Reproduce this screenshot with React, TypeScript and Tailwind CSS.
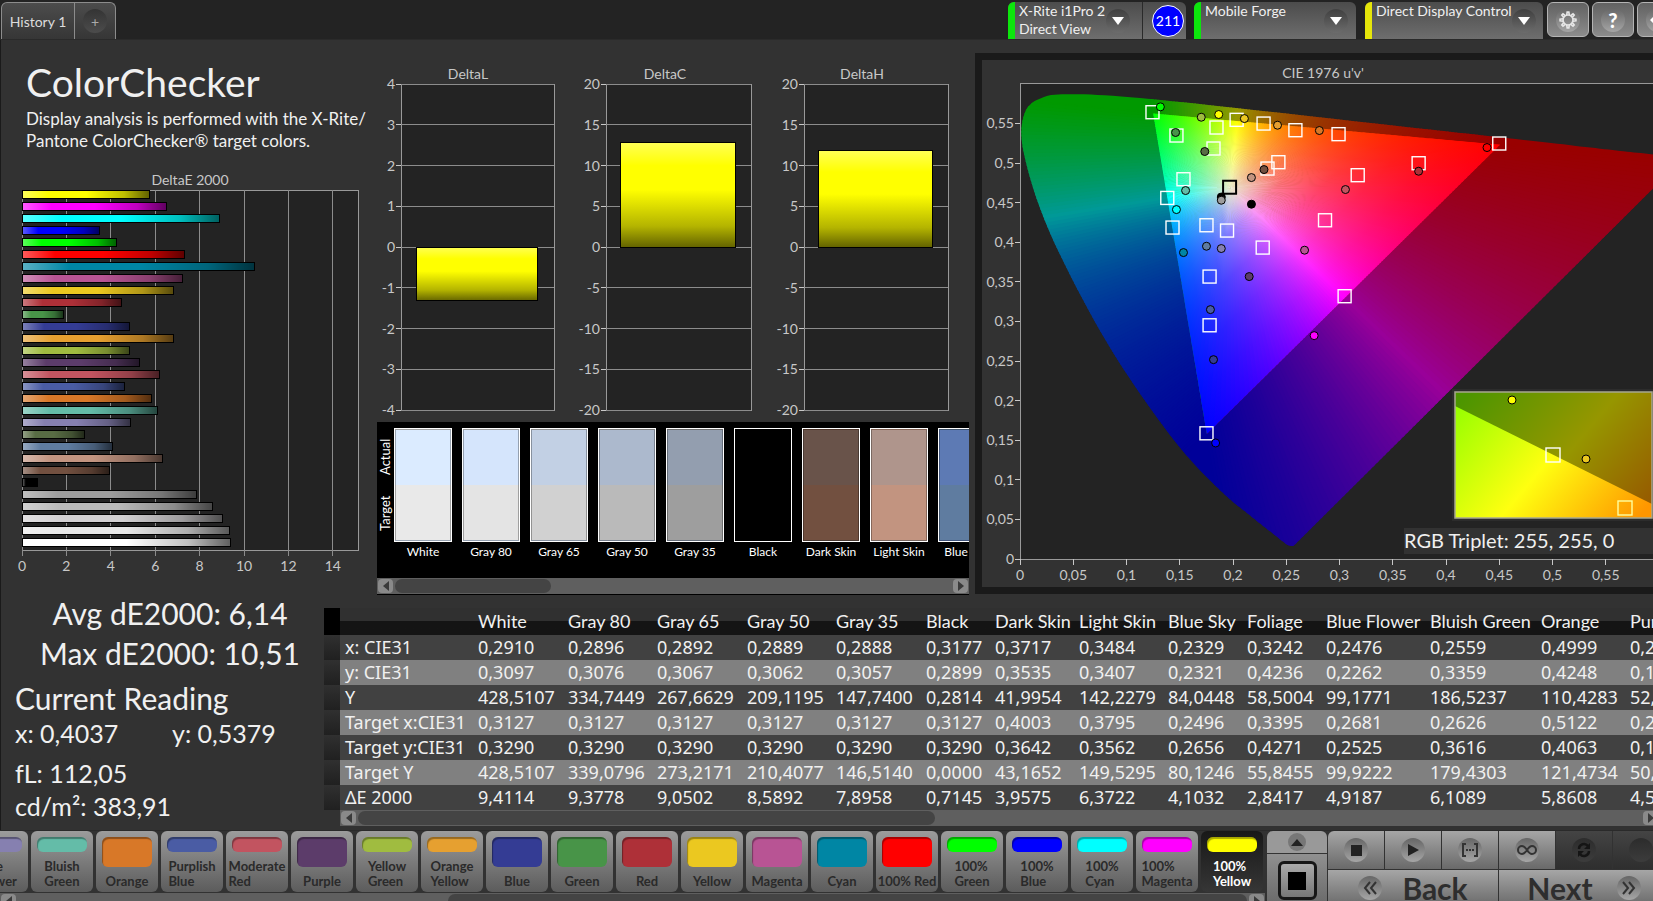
import React from 'react';

type Patch = { name: string; color: string; value: number };

const patches: Patch[] = [
  { name: '100% Yellow', color: '#ffff00', value: 5.78 },
  { name: '100% Magenta', color: '#ff00ff', value: 6.53 },
  { name: '100% Cyan', color: '#00ffff', value: 8.91 },
  { name: '100% Blue', color: '#0000ff', value: 3.5 },
  { name: '100% Green', color: '#00ff00', value: 4.3 },
  { name: '100% Red', color: '#ff0000', value: 7.32 },
  { name: 'Cyan', color: '#0086a4', value: 10.51 },
  { name: 'Magenta', color: '#b85494', value: 7.23 },
  { name: 'Yellow', color: '#ebc820', value: 6.83 },
  { name: 'Red', color: '#ae3038', value: 4.5 },
  { name: 'Green', color: '#489448', value: 1.87 },
  { name: 'Blue', color: '#343c94', value: 4.85 },
  { name: 'Orange Yellow', color: '#e6a030', value: 6.83 },
  { name: 'Yellow Green', color: '#a0bc40', value: 4.85 },
  { name: 'Purple', color: '#5c3c6a', value: 5.3 },
  { name: 'Moderate Red', color: '#c25460', value: 6.2 },
  { name: 'Purplish Blue', color: '#4a5ca4', value: 4.62 },
  { name: 'Orange', color: '#d87828', value: 5.86 },
  { name: 'Bluish Green', color: '#64bca8', value: 6.11 },
  { name: 'Blue Flower', color: '#8680b0', value: 4.92 },
  { name: 'Foliage', color: '#586c44', value: 2.84 },
  { name: 'Blue Sky', color: '#5f7ca0', value: 4.1 },
  { name: 'Light Skin', color: '#c29480', value: 6.37 },
  { name: 'Dark Skin', color: '#725040', value: 3.96 },
  { name: 'Black', color: '#000000', value: 0.71 },
  { name: 'Gray 35', color: '#9d9d9d', value: 7.9 },
  { name: 'Gray 50', color: '#bababa', value: 8.59 },
  { name: 'Gray 65', color: '#d2d0d2', value: 9.05 },
  { name: 'Gray 80', color: '#e8e8e8', value: 9.38 },
  { name: 'White', color: '#ffffff', value: 9.41 },
];

const swatches = [
  { name: 'White', actual: '#dbebff', target: '#e9e9e9' },
  { name: 'Gray 80', actual: '#d5e5fc', target: '#e4e4e4' },
  { name: 'Gray 65', actual: '#c2d0e4', target: '#d1d1d1' },
  { name: 'Gray 50', actual: '#acb9cd', target: '#bababa' },
  { name: 'Gray 35', actual: '#939eaf', target: '#9e9e9e' },
  { name: 'Black', actual: '#000000', target: '#000000' },
  { name: 'Dark Skin', actual: '#69534a', target: '#725040' },
  { name: 'Light Skin', actual: '#af958c', target: '#c29480' },
  { name: 'Blue Sky', actual: '#5d7ab4', target: '#5f7ca0' },
];

const columns = [
  { name: 'White', width: 90, cells: ['0,2910', '0,3097', '428,5107', '0,3127', '0,3290', '428,5107', '9,4114'] },
  { name: 'Gray 80', width: 89, cells: ['0,2896', '0,3076', '334,7449', '0,3127', '0,3290', '339,0796', '9,3778'] },
  { name: 'Gray 65', width: 90, cells: ['0,2892', '0,3067', '267,6629', '0,3127', '0,3290', '273,2171', '9,0502'] },
  { name: 'Gray 50', width: 89, cells: ['0,2889', '0,3062', '209,1195', '0,3127', '0,3290', '210,4077', '8,5892'] },
  { name: 'Gray 35', width: 90, cells: ['0,2888', '0,3057', '147,7400', '0,3127', '0,3290', '146,5140', '7,8958'] },
  { name: 'Black', width: 69, cells: ['0,3177', '0,2899', '0,2814', '0,3127', '0,3290', '0,0000', '0,7145'] },
  { name: 'Dark Skin', width: 84, cells: ['0,3717', '0,3535', '41,9954', '0,4003', '0,3642', '43,1652', '3,9575'] },
  { name: 'Light Skin', width: 89, cells: ['0,3484', '0,3407', '142,2279', '0,3795', '0,3562', '149,5295', '6,3722'] },
  { name: 'Blue Sky', width: 79, cells: ['0,2329', '0,2321', '84,0448', '0,2496', '0,2656', '80,1246', '4,1032'] },
  { name: 'Foliage', width: 79, cells: ['0,3242', '0,4236', '58,5004', '0,3395', '0,4271', '55,8455', '2,8417'] },
  { name: 'Blue Flower', width: 104, cells: ['0,2476', '0,2262', '99,1771', '0,2681', '0,2525', '99,9222', '4,9187'] },
  { name: 'Bluish Green', width: 111, cells: ['0,2559', '0,3359', '186,5237', '0,2626', '0,3616', '179,4303', '6,1089'] },
  { name: 'Orange', width: 89, cells: ['0,4999', '0,4248', '110,4283', '0,5122', '0,4063', '121,4734', '5,8608'] },
  { name: 'Purplish Blue', width: 111, cells: ['0,2141', '0,1962', '52,6113', '0,2164', '0,1898', '50,9184', '4,5903'] },
];

const rowLabels = ['x: CIE31', 'y: CIE31', 'Y', 'Target x:CIE31', 'Target y:CIE31', 'Target Y', 'ΔE 2000'];

const targets: [number, number][] = [
  [0.1244, 0.5641], [0.1469, 0.5347], [0.1845, 0.5448], [0.2034, 0.5545], [0.2287, 0.5498],
  [0.2586, 0.5414], [0.2991, 0.5364], [0.45, 0.5246], [0.1817, 0.5183], [0.2426, 0.501],
  [0.2324, 0.493], [0.3743, 0.4997], [0.3171, 0.4846], [0.1535, 0.4795], [0.1383, 0.4559],
  [0.1432, 0.4185], [0.1751, 0.4214], [0.1944, 0.4147], [0.2279, 0.3932], [0.2864, 0.4277],
  [0.178, 0.3566], [0.3048, 0.3318], [0.178, 0.2951], [0.1751, 0.1587],
];

const readings: [number, number, string][] = [
  [0.1318, 0.5709, '#00ff00'], [0.1702, 0.5578, '#a0bc40'], [0.1866, 0.5612, '#ffff00'],
  [0.2107, 0.5561, '#ebc820'], [0.2418, 0.5477, '#e6a030'], [0.2811, 0.541, '#d87828'],
  [0.4385, 0.5195, '#ff0000'], [0.3743, 0.4896, '#ae3038'], [0.1461, 0.5385, '#489448'],
  [0.1735, 0.5145, '#586c44'], [0.2291, 0.4917, '#725040'], [0.2173, 0.4816, '#c29480'],
  [0.3056, 0.4665, '#c25460'], [0.1555, 0.4652, '#64bca8'], [0.1469, 0.4412, '#00ffff'],
  [0.189, 0.457, '#000000'], [0.189, 0.453, '#9d9d9d'], [0.2173, 0.448, '#000000'],
  [0.1535, 0.3869, '#0086a4'], [0.1751, 0.3949, '#5f7ca0'], [0.189, 0.392, '#8680b0'],
  [0.2672, 0.3899, '#b85494'], [0.2152, 0.3566, '#5c3c6a'], [0.1788, 0.3149, '#4a5ca4'],
  [0.1817, 0.2517, '#343c94'], [0.2762, 0.282, '#ff00ff'], [0.1837, 0.1465, '#0000ff'],
];

// Spectral locus, u'v'
const locus: [number, number][] = [
  [0.2568, 0.0165], [0.2522, 0.0169], [0.2461, 0.0226], [0.2347, 0.035], [0.2161, 0.0549],
  [0.1877, 0.0871], [0.1441, 0.151], [0.0828, 0.2708], [0.0282, 0.4117], [0.0035, 0.5131],
  [0.0046, 0.5638], [0.0231, 0.5837], [0.0501, 0.5868], [0.0792, 0.5856], [0.1127, 0.5821],
  [0.1531, 0.5766], [0.2026, 0.5694], [0.2623, 0.5605], [0.3315, 0.5501], [0.4035, 0.5393],
  [0.5203, 0.5219], [0.583, 0.5125], [0.6234, 0.5065],
];

const gamut: [number, number][] = [[0.4507, 0.5229], [0.125, 0.5625], [0.1754, 0.1579]];
const white: [number, number] = [0.1978, 0.4683];

const px = (u: number) => 38 + u * 1065;
const py = (v: number) => 499 - v * 792;

function rgbAt(u: number, v: number, level = 1) {
  const d = 6 * u - 16 * v + 12;
  const x = (9 * u) / d;
  const y = (4 * v) / d;
  const X = x / y;
  const Z = (1 - x - y) / y;
  const rgb = [
    3.2406 * X - 1.5372 - 0.4986 * Z,
    -0.9689 * X + 1.8758 + 0.0415 * Z,
    0.0557 * X - 0.204 + 1.057 * Z,
  ].map((c) => Math.max(0, c));
  const max = Math.max(...rgb);
  return `rgb(${rgb.map((c) => Math.round((c / max) * 255 * level)).join(',')})`;
}

// Distance from white to the gamut edge along a direction
function edgeDistance(du: number, dv: number) {
  let best = Infinity;
  gamut.forEach((a, i) => {
    const b = gamut[(i + 1) % 3];
    const ex = b[0] - a[0];
    const ey = b[1] - a[1];
    const det = ex * dv - ey * du;
    if (Math.abs(det) < 1e-9) return;
    const wx = a[0] - white[0];
    const wy = a[1] - white[1];
    const t = (ex * wy - ey * wx) / det;
    if (t > 0 && t < best) best = t;
  });
  return best;
}

const mix = (a: [number, number], b: [number, number], t: number): [number, number] => [
  a[0] + (b[0] - a[0]) * t,
  a[1] + (b[1] - a[1]) * t,
];

const SECTORS = 360;
const sectors = Array.from({ length: SECTORS }, (_, i) => {
  const step = (2 * Math.PI) / SECTORS;
  const a = i * step;
  const b = a + step * 1.6;
  const m = a + step / 2;
  const dist = edgeDistance(Math.cos(m), Math.sin(m));
  const at = (angle: number, r: number): [number, number] => [
    white[0] + Math.cos(angle) * r,
    white[1] + Math.sin(angle) * r,
  ];
  return { id: `s${i}`, a: at(a, 0.9), b: at(b, 0.9), edge: at(m, dist) };
});

// Outside the gamut the hue is constant on lines through the opposite primary
const FAN = 120;
const fans = gamut.flatMap((apex, k) => {
  const from = gamut[(k + 1) % 3];
  const to = gamut[(k + 2) % 3];
  return Array.from({ length: FAN }, (_, i) => {
    const mid = mix(from, to, (i + 0.5) / FAN);
    return {
      id: `f${k}-${i}`,
      points: [
        apex,
        mix(apex, mix(from, to, i / FAN), 5),
        mix(apex, mix(from, to, Math.min(1, (i + 1.5) / FAN)), 5),
      ],
      fill: rgbAt(mid[0], mid[1], 0.6),
    };
  });
});

const corners = gamut.map((apex, k) => ({
  points: [apex, mix(gamut[(k + 1) % 3], apex, 5), mix(gamut[(k + 2) % 3], apex, 5)],
  fill: ['#990000', '#009900', '#000099'][k],
}));

const toPoints = (list: [number, number][]) => list.map(([u, v]) => `${px(u)},${py(v)}`).join(' ');

function locusPath() {
  const p = locus.map(([u, v]) => [px(u), py(v)]);
  let d = `M${p[0][0]} ${p[0][1]}`;
  for (let i = 0; i < p.length - 1; i++) {
    const p0 = p[Math.max(0, i - 1)];
    const p1 = p[i];
    const p2 = p[i + 1];
    const p3 = p[Math.min(p.length - 1, i + 2)];
    d += `C${p1[0] + (p2[0] - p0[0]) / 6} ${p1[1] + (p2[1] - p0[1]) / 6} ${p2[0] - (p3[0] - p1[0]) / 6} ${
      p2[1] - (p3[1] - p1[1]) / 6
    } ${p2[0]} ${p2[1]}`;
  }
  return d + 'Z';
}

const comma = (n: number) => String(n).replace('.', ',');

const DeltaEChart: React.FC = () => {
  const x = (v: number) => 22 + v * 22.2;
  return (
    <svg viewBox="0 0 370 410" className="block w-full overflow-visible" role="img" aria-label="DeltaE 2000">
      <defs>
        <linearGradient id="bar">
          <stop offset="0" stopColor="#fff" stopOpacity="0.35" />
          <stop offset="0.2" stopColor="#fff" stopOpacity="0" />
          <stop offset="0.5" stopColor="#000" stopOpacity="0" />
          <stop offset="0.8" stopColor="#000" stopOpacity="0.25" />
          <stop offset="1" stopColor="#000" stopOpacity="0.62" />
        </linearGradient>
      </defs>
      <text x="190" y="17" textAnchor="middle" className="fill-[#c8c8c8] text-[14px]">DeltaE 2000</text>
      <rect x="22" y="22" width="336" height="360" fill="#232323" stroke="#999" shapeRendering="crispEdges" />
      {[0, 2, 4, 6, 8, 10, 12, 14].map((t) => (
        <g key={t}>
          <path d={`M${x(t)} 22V388`} stroke="#8c8c8c" shapeRendering="crispEdges" />
          <text x={x(t)} y="403" textAnchor="middle" className="fill-[#c8c8c8] text-[14px]">{t}</text>
        </g>
      ))}
      {patches.map((p, i) => (
        <g key={p.name} shapeRendering="crispEdges">
          <rect x="22" y={22 + i * 12} width={p.value * 22.2} height="9" fill="#000" />
          <rect x="23" y={23 + i * 12} width={p.value * 22.2 - 2} height="7" fill={p.color} />
          <rect x="23" y={23 + i * 12} width={p.value * 22.2 - 2} height="7" fill="url(#bar)" />
        </g>
      ))}
    </svg>
  );
};

const DeltaChart: React.FC<{ title: string; max: number; value: number; left: number }> = ({
  title,
  max,
  value,
  left,
}) => {
  const width = 184 - left;
  const y = (v: number) => 180 - (v / max) * 163;
  const ticks = Array.from({ length: 9 }, (_, i) => max - (i * max) / 4);
  const top = y(Math.max(0, value));
  return (
    <svg viewBox="0 0 197 355" className="block w-full overflow-visible" role="img" aria-label={title}>
      <defs>
        <linearGradient id={title} x1="0" y1="0" x2="0" y2="1">
          <stop offset="0" stopColor="#ffff55" />
          <stop offset="0.22" stopColor="#ffff00" />
          <stop offset="0.45" stopColor="#ffff00" />
          <stop offset="0.8" stopColor="#b4b400" />
          <stop offset="1" stopColor="#646400" />
        </linearGradient>
      </defs>
      <text x="98" y="12" textAnchor="middle" className="fill-[#c8c8c8] text-[14px]">{title}</text>
      <rect x={left} y="17" width={width} height="326" fill="#232323" stroke="#999" shapeRendering="crispEdges" />
      {ticks.map((t) => (
        <g key={t}>
          <path d={`M${left} ${y(t)}H${left + width}`} stroke="#8c8c8c" shapeRendering="crispEdges" />
          <path d={`M${left - 5} ${y(t)}H${left}`} stroke="#c8c8c8" shapeRendering="crispEdges" />
          <text x={left - 6} y={y(t) + 5} textAnchor="end" className="fill-[#c8c8c8] text-[14px]">{t}</text>
        </g>
      ))}
      <rect
        x={left + width * 0.1}
        y={top}
        width={width * 0.79}
        height={(Math.abs(value) / max) * 163}
        fill={`url(#${title})`}
        stroke="#000"
        shapeRendering="crispEdges"
      />
    </svg>
  );
};

const ChromaticityChart: React.FC = () => {
  const steps = Array.from({ length: 12 }, (_, i) => i * 5);
  return (
    <svg viewBox="0 0 682 527" className="block w-full" role="img" aria-label="CIE 1976 u'v'">
      <defs>
        <clipPath id="locus"><path d={locusPath()} /></clipPath>
        <clipPath id="gamut"><polygon points={toPoints(gamut)} /></clipPath>
        {sectors.map((s) => (
          <linearGradient
            key={s.id}
            id={s.id}
            gradientUnits="userSpaceOnUse"
            x1={px(white[0])}
            y1={py(white[1])}
            x2={px(s.edge[0])}
            y2={py(s.edge[1])}
          >
            {[0, 0.2, 0.4, 0.6, 0.8, 1].map((t) => {
              const [u, v] = mix(white, s.edge, t);
              return <stop key={t} offset={t} stopColor={rgbAt(u, v)} />;
            })}
          </linearGradient>
        ))}
        <linearGradient id="insetIn" gradientUnits="userSpaceOnUse" x1="17" y1="-5" x2="179" y2="131">
          <stop offset="0" stopColor="#96ff00" />
          <stop offset="0.5" stopColor="#ffff10" />
          <stop offset="1" stopColor="#ff9600" />
        </linearGradient>
        <linearGradient id="insetOut" gradientUnits="userSpaceOnUse" x1="17" y1="-5" x2="179" y2="131">
          <stop offset="0" stopColor="#4c9600" />
          <stop offset="0.55" stopColor="#969600" />
          <stop offset="1" stopColor="#965a00" />
        </linearGradient>
      </defs>
      <text x="341" y="18" textAnchor="middle" className="fill-[#c8c8c8] text-[14px]">CIE 1976 u'v'</text>
      <rect x="38" y="23" width="660" height="476" fill="#232323" stroke="#999" shapeRendering="crispEdges" />
      <g clipPath="url(#locus)">
        {corners.map((c) => (
          <polygon key={c.fill} points={toPoints(c.points)} fill={c.fill} stroke={c.fill} strokeWidth="3" />
        ))}
        {fans.map((f) => (
          <polygon key={f.id} points={toPoints(f.points)} fill={f.fill} />
        ))}
        <g clipPath="url(#gamut)">
          {sectors.map((s) => (
            <polygon key={s.id} points={toPoints([white, s.a, s.b])} fill={`url(#${s.id})`} />
          ))}
        </g>
      </g>
      {steps.map((s) => (
        <g key={s} className="fill-[#c8c8c8] text-[14px]">
          <path d={`M33 ${py(s / 100)}H38M${px(s / 100)} 499V505`} stroke="#c8c8c8" shapeRendering="crispEdges" />
          <text x="32" y={py(s / 100) + 5} textAnchor="end">{comma(s / 100)}</text>
          <text x={px(s / 100)} y="520" textAnchor="middle">{comma(s / 100)}</text>
        </g>
      ))}
      {targets.map(([u, v]) => (
        <rect key={`${u}-${v}`} x={px(u) - 6.5} y={py(v) - 6.5} width="13" height="13" fill="none" stroke="#fff" strokeWidth="1.4" />
      ))}
      <rect x={px(0.1968) - 6.5} y={py(0.4694) - 6.5} width="13" height="13" fill="none" stroke="#000" strokeWidth="2" />
      {readings.map(([u, v, color]) => (
        <circle key={`${u}-${v}`} cx={px(u)} cy={py(v)} r="4" fill={color} stroke="#000" />
      ))}
      <g transform="translate(473 332)">
        <rect x="-3" y="-3" width="220" height="132" fill="#2c2c2c" />
        <rect width="197" height="126" fill="url(#insetOut)" />
        <path d="M0 14L197 112V126H0Z" fill="url(#insetIn)" />
        <rect width="197" height="126" fill="none" stroke="#a8a890" strokeWidth="1.5" />
        <rect x="91" y="56" width="14" height="14" fill="none" stroke="#fff" strokeWidth="1.4" />
        <rect x="163" y="109" width="14" height="14" fill="none" stroke="#ffffa0" strokeWidth="1.4" />
        <circle cx="57" cy="8" r="4" fill="#ffff00" stroke="#000" />
        <circle cx="131" cy="67" r="4" fill="#ebc820" stroke="#000" />
      </g>
      <rect x="422" y="468" width="260" height="26" fill="#323232" />
      <text x="422" y="488" className="fill-[#f0f0f0] text-[20px]">RGB Triplet: 255, 255, 0</text>
    </svg>
  );
};

const Arrow: React.FC<{ dir: 'left' | 'right' }> = ({ dir }) => (
  <button
    aria-label={`Scroll ${dir}`}
    className="flex h-[14px] w-[15px] shrink-0 items-center justify-center rounded-sm bg-[#8a8a8a]"
  >
    <svg viewBox="0 0 8 10" className="h-[10px] w-2">
      <path d={dir === 'left' ? 'M7 0V10L1 5Z' : 'M1 0V10L7 5Z'} fill="#3a3a3a" />
    </svg>
  </button>
);

const ScrollBar: React.FC<{ start: string; size: string }> = ({ start, size }) => (
  <div className="flex h-4 items-center gap-[2px] bg-[#5f5f5f] px-px">
    <Arrow dir="left" />
    <div className="flex h-[14px] flex-1">
      <div style={{ width: start }} />
      <div className="rounded-lg bg-[#444]" style={{ width: size }} />
    </div>
    <Arrow dir="right" />
  </div>
);

const Knob: React.FC<{ children?: React.ReactNode; dark?: boolean }> = ({ children, dark }) => (
  <span
    className={`flex size-6 shrink-0 items-center justify-center rounded-full bg-linear-to-b ${
      dark ? 'from-[#2c2c2c] to-[#3c3c3c]' : 'from-[#666] to-[#a6a6a6]'
    }`}
  >
    {children}
  </span>
);

const DropKnob = () => (
  <span className="flex size-6 shrink-0 items-center justify-center rounded-full bg-linear-to-b from-[#404040] to-[#6c6c6c]">
    <svg viewBox="0 0 12 8" className="h-2 w-3"><path d="M0 0H12L6 8Z" fill="#fff" /></svg>
  </span>
);

const DeviceTab: React.FC<{ lines: string[]; yellow?: boolean; className: string; badge?: string }> = ({
  lines,
  yellow,
  className,
  badge,
}) => (
  <div className={`flex h-[37px] overflow-hidden rounded-t-md bg-linear-to-b from-[#4c4c4c] to-[#6e6e6e] ${className}`}>
    <div className={`w-[7px] shrink-0 ${yellow ? 'bg-[#e6e60a]' : 'bg-[#0ce60c]'}`} />
    <button
      className={`flex flex-1 items-center justify-between pl-1 text-left text-[14px] leading-[18px] text-[#f0f0f0] ${
        badge ? 'pr-3' : 'pr-2'
      }`}
    >
      <span className="self-start whitespace-nowrap">
        {lines.map((l) => (
          <span key={l} className="block">{l}</span>
        ))}
      </span>
      <DropKnob />
    </button>
    {badge && (
      <div className="flex w-[44px] items-center justify-end border-l border-[#2a2a2a] pr-[2px]">
        <span className="flex size-8 items-center justify-center rounded-full border border-white bg-[#0000ff] text-[14px] text-white">
          {badge}
        </span>
      </div>
    )}
  </div>
);

const ToolButton: React.FC<{ label: string; children: React.ReactNode }> = ({ label, children }) => (
  <button
    aria-label={label}
    className="flex h-[35px] w-[42px] shrink-0 items-center justify-center rounded-md border border-[#b4b4b4] bg-linear-to-b from-[#626262] to-[#8c8c8c]"
  >
    {children}
  </button>
);

const TopBar = () => (
  <header className="flex h-10 shrink-0 justify-between overflow-hidden border-b border-[#2a2a2a] bg-[#232323] pt-[2px]">
    <nav className="ml-px flex h-[37px] rounded-t-md border border-b-0 border-[#8c8c8c] bg-linear-to-b from-[#4c4c4c] to-[#363636]">
      <button className="w-[73px] border-r border-[#8c8c8c] text-[14px] text-[#dcdcdc]">History 1</button>
      <button aria-label="Add history" className="flex w-10 items-center justify-center">
        <span className="flex size-6 items-center justify-center rounded-full bg-linear-to-b from-[#343434] to-[#4c4c4c] text-[14px] text-[#aaa]">
          +
        </span>
      </button>
    </nav>
    <div className="-mr-[26px] flex shrink-0">
      <DeviceTab lines={['X-Rite i1Pro 2', 'Direct View']} className="w-[178px]" badge="211" />
      <DeviceTab lines={['Mobile Forge']} className="ml-2 w-[162px]" />
      <DeviceTab lines={['Direct Display Control']} className="ml-[9px] w-[178px]" yellow />
      <div className="ml-1 flex gap-[3px]">
        <ToolButton label="Settings">
          <Knob>
            <svg viewBox="0 0 24 24" className="size-5" fill="none" stroke="#e6e6e6" strokeWidth="2">
              <circle cx="12" cy="12" r="6" />
              {[0, 45, 90, 135, 180, 225, 270, 315].map((a) => (
                <path key={a} d="M10.5 6L11 2.5H13L13.5 6" transform={`rotate(${a} 12 12)`} />
              ))}
            </svg>
          </Knob>
        </ToolButton>
        <ToolButton label="Help">
          <Knob><span className="text-[20px] font-black text-white">?</span></Knob>
        </ToolButton>
        <ToolButton label="Back">
          <Knob>
            <svg viewBox="0 0 16 16" className="size-4"><path d="M8 2L2 8L8 14M2 8H15" fill="none" stroke="#fff" strokeWidth="3" /></svg>
          </Knob>
        </ToolButton>
      </div>
    </div>
  </header>
);

const SwatchStrip = () => (
  <section className="mr-[6px] ml-[7px] bg-black pb-px">
    <div className="flex overflow-hidden pt-[6px] pb-4">
      <div className="flex h-[114px] w-[17px] shrink-0 rotate-180 items-center justify-around text-[13px] leading-[17px] text-white [writing-mode:vertical-rl]">
        <span>Target</span>
        <span>Actual</span>
      </div>
      <div className="flex gap-[10px]">
        {swatches.map((s) => (
          <figure key={s.name} className="w-[58px] shrink-0">
            <div className="h-[114px] border border-white">
              <div className="h-full border border-black/30" style={{ background: `linear-gradient(${s.actual} 50%, ${s.target} 50%)` }} />
            </div>
            <figcaption className="text-center text-[12px] leading-5 whitespace-nowrap text-white">{s.name}</figcaption>
          </figure>
        ))}
      </div>
    </div>
    <ScrollBar start="0%" size="28%" />
  </section>
);

const Readings = () => (
  <section className="-mt-[2px] w-[324px] shrink-0 pl-[14px] text-[#f0f0f0]">
    <p className="text-center text-[30px] leading-10">Avg dE2000: 6,14</p>
    <p className="text-center text-[30px] leading-10">Max dE2000: 10,51</p>
    <h2 className="mt-[6px] text-[30px] leading-[38px]">Current Reading</h2>
    <p className="flex text-[25px] leading-8">
      <span className="w-[157px]">x: 0,4037</span>
      <span>y: 0,5379</span>
    </p>
    <p className="mt-2 text-[25px] leading-8">fL: 112,05</p>
    <p className="text-[25px] leading-[34px]">cd/m²: 383,91</p>
  </section>
);

const DataTable = () => (
  <section className="-mr-[6px] -ml-px min-w-0 flex-1 pt-[13px]">
    <div className="overflow-hidden">
      <table className="w-[1412px] table-fixed border-collapse text-left text-[#f0f0f0]">
        <colgroup>
          <col style={{ width: 16 }} />
          <col style={{ width: 133 }} />
          {columns.map((c) => (
            <col key={c.name} style={{ width: c.width }} />
          ))}
        </colgroup>
        <thead>
          <tr className="h-[27px] bg-linear-to-b from-[#303030] from-50% to-[#141414] to-50% text-[18px] leading-[27px]">
            <th className="bg-black" />
            <th />
            {columns.map((c) => (
              <th key={c.name} className="pl-[5px] font-normal whitespace-nowrap">{c.name}</th>
            ))}
          </tr>
        </thead>
        <tbody className="font-['Noto_Sans',sans-serif] text-[18px] leading-[25px]">
          {rowLabels.map((label, r) => (
            <tr key={label} className="h-[25px] odd:bg-[#414141] even:bg-[#808080]">
              <td className="bg-linear-to-b from-[#303030] to-[#202020]" />
              <th className="pl-[5px] font-normal whitespace-nowrap">{label}</th>
              {columns.map((c) => (
                <td key={c.name} className="pl-[5px] whitespace-nowrap">{c.cells[r]}</td>
              ))}
            </tr>
          ))}
        </tbody>
      </table>
    </div>
    <div className="ml-4">
      <ScrollBar start="0%" size="45%" />
    </div>
  </section>
);

const chips = patches.slice(0, 20).reverse();

const PatchBar = () => (
  <div className="w-[1265px] overflow-hidden">
    <div className="-ml-[34px] flex gap-[3px]">
      {chips.map((c) => {
        const words = c.name === '100% Red' ? [c.name] : c.name.split(' ');
        const selected = c.name === '100% Yellow';
        return (
          <button
            key={c.name}
            className={`flex h-[61px] w-[62px] shrink-0 flex-col items-center justify-between rounded-md bg-linear-to-b pt-[6px] pb-[3px] ${
              selected ? 'from-[#181818] to-[#363636] text-white' : 'from-[#9c9c9c] to-[#5c5c5c] text-[#2a2a2a]'
            }`}
          >
            <span
              className={`w-[50px] rounded-md shadow-[inset_1px_2px_1px_rgba(0,0,0,0.35)] ${words.length > 1 ? 'h-[15px]' : 'h-[30px]'}`}
              style={{ backgroundColor: c.color }}
            />
            <span className="text-left text-[13px] leading-[15px] font-bold whitespace-nowrap">
              {words.map((w) => (
                <span key={w} className="block">{w}</span>
              ))}
            </span>
          </button>
        );
      })}
    </div>
    <div className="mt-px">
      <ScrollBar start="35%" size="65%" />
    </div>
  </div>
);

const control = 'flex items-center justify-center bg-linear-to-b from-[#a6a6a6] to-[#6a6a6a]';
const disabled = 'flex items-center justify-center bg-linear-to-b from-[#444] to-[#2e2e2e]';

const Transport = () => (
  <div className="-mr-4 grid flex-1 grid-cols-6 grid-rows-[38px_36px] gap-px">
    <button aria-label="Stop" className={`${control} rounded-tl-md`}>
      <Knob><span className="size-[11px] bg-[#222]" /></Knob>
    </button>
    <button aria-label="Play" className={control}>
      <Knob><svg viewBox="0 0 12 12" className="size-3"><path d="M1 0L12 6L1 12Z" fill="#222" /></svg></Knob>
    </button>
    <button aria-label="Range" className={control}>
      <Knob>
        <svg viewBox="0 0 18 14" className="h-[14px] w-[18px]" fill="none" stroke="#333" strokeWidth="2">
          <path d="M5 1H2V13H5M13 1H16V13H13M5 7H7M8 7H10M11 7H13" />
        </svg>
      </Knob>
    </button>
    <button aria-label="Loop" className={control}>
      <Knob>
        <svg viewBox="0 0 20 10" className="h-[10px] w-5" fill="none" stroke="#333" strokeWidth="2">
          <path d="M10 5C8 2 7 1 5 1A4 4 0 0 0 5 9C7 9 8 8 10 5C12 2 13 1 15 1A4 4 0 0 1 15 9C13 9 12 8 10 5Z" />
        </svg>
      </Knob>
    </button>
    <button aria-label="Refresh" className={disabled} disabled>
      <Knob dark>
        <svg viewBox="0 0 16 16" className="size-4" fill="none" stroke="#151515" strokeWidth="2.5">
          <path d="M3 7A5 5 0 0 1 12 4M13 9A5 5 0 0 1 4 12" />
          <path d="M14 1V7H8ZM2 15V9H8Z" fill="#151515" stroke="none" />
        </svg>
      </Knob>
    </button>
    <button aria-label="Record" className={disabled} disabled><Knob dark /></button>
    <button className={`${control} col-span-3 gap-5`}>
      <Knob>
        <svg viewBox="0 0 14 14" className="size-[14px]" fill="none" stroke="#333" strokeWidth="2"><path d="M7 1L2 7L7 13M13 1L8 7L13 13" /></svg>
      </Knob>
      <span className="text-[30px] leading-8 font-bold text-[#2e2e2e]">Back</span>
    </button>
    <button className={`${control} col-span-3 gap-6`}>
      <span className="text-[30px] leading-8 font-bold text-[#2e2e2e]">Next</span>
      <Knob>
        <svg viewBox="0 0 14 14" className="size-[14px]" fill="none" stroke="#333" strokeWidth="2"><path d="M1 1L6 7L1 13M7 1L12 7L7 13" /></svg>
      </Knob>
    </button>
  </div>
);

const Footer = () => (
  <footer className="flex h-[71px] shrink-0 overflow-hidden border-t border-[#2a2a2a] bg-[#323232]">
    <PatchBar />
    <div className="mr-px ml-[2px] flex w-[60px] shrink-0 flex-col">
      <button aria-label="Expand" className="flex h-[23px] shrink-0 items-center justify-center rounded-t-md border-b border-[#333] bg-[#999]">
        <span className="flex size-[18px] items-center justify-center rounded-full bg-[#777]">
          <svg viewBox="0 0 12 7" className="h-[7px] w-3"><path d="M0 7H12L6 0Z" fill="#222" /></svg>
        </span>
      </button>
      <div className="flex h-16 shrink-0 justify-center bg-linear-to-b from-[#909090] to-[#606060] pt-[7px]">
        <button
          aria-label="Pattern window"
          className="flex size-[39px] items-center justify-center rounded-md border-[3px] border-[#161616] bg-linear-to-b from-[#aaa] to-[#777]"
        >
          <span className="size-[18px] bg-black" />
        </button>
      </div>
    </div>
    <Transport />
  </footer>
);

export default function App() {
  return (
    <div className="flex h-screen flex-col overflow-hidden bg-[#323232] font-[Lato,'Liberation_Sans',sans-serif]">
      <TopBar />
      <main className="flex-1 overflow-hidden border-l border-[#1a1a1a]">
        <div className="-mr-[18px] -ml-px grid grid-cols-[minmax(0,370fr)_minmax(0,605fr)_minmax(0,696fr)]">
          <div>
            <div className="pt-4 pl-[26px] text-[#f0f0f0]">
              <h1 className="text-[39px] leading-[52px]">ColorChecker</h1>
              <p className="text-[17px] leading-[22px] whitespace-nowrap">
                Display analysis is performed with the X-Rite/
                <br />
                Pantone ColorChecker® target colors.
              </p>
            </div>
            <div className="mt-4">
              <DeltaEChart />
            </div>
          </div>
          <div>
            <div className="mr-[14px] grid grid-cols-3 pt-[27px]">
              <DeltaChart title="DeltaL" max={4} value={-1.32} left={31} />
              <DeltaChart title="DeltaC" max={20} value={12.8} left={39} />
              <DeltaChart title="DeltaH" max={20} value={11.8} left={40} />
            </div>
            <SwatchStrip />
          </div>
          <section className="mt-[13px] self-start border-[7px] border-[#1a1a1a]">
            <ChromaticityChart />
          </section>
        </div>
        <div className="flex">
          <Readings />
          <DataTable />
        </div>
      </main>
      <Footer />
    </div>
  );
}
